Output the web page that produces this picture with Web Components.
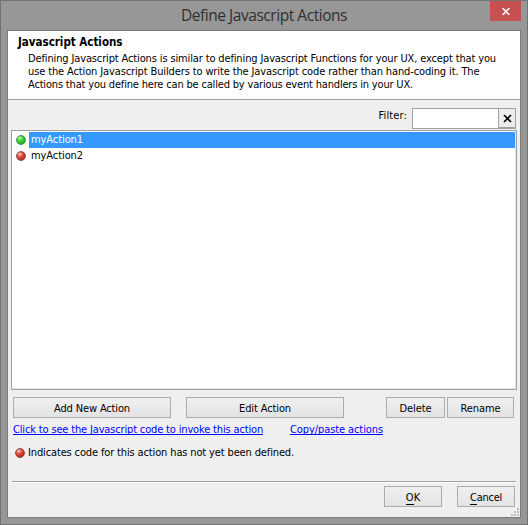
<!DOCTYPE html>
<html lang="en"><head><meta charset="utf-8"><title>Define Javascript Actions</title>
<style>
html,body{margin:0;height:100%;overflow:hidden}
body{font:11px/13px "DejaVu Sans Condensed","DejaVu Sans",sans-serif;font-stretch:condensed;color:#000}
</style></head><body>
<js-dialog></js-dialog>
<script>
const define=(name,html,ready)=>customElements.define(name,class extends HTMLElement{
  connectedCallback(){
    if(this.shadowRoot)return;
    this.attachShadow({mode:"open"}).innerHTML=html;
    if(ready)ready.call(this,this.shadowRoot);
  }
});
// One line of text tracked so that it fills the width given in "w".
define("fit-text",`<style>:host{display:block;white-space:pre;width:max-content;flex:none}span{display:inline-block}::slotted(u){text-decoration:none;border-bottom:1px solid}</style><span><slot></slot></span>`,function(r){
  const w=+this.getAttribute("w"),s=r.querySelector("span"),n=this.textContent.length;
  const gap=(w-s.getBoundingClientRect().width)/n;
  s.style.letterSpacing=gap.toFixed(4)+"px";
});
define("push-button",`<style>:host{display:flex;box-sizing:border-box;height:21px;border:1px solid #acacac;background:linear-gradient(#f0f0f0,#e3e3e3);justify-content:center;padding-top:4px;flex:none}</style><slot></slot>`);
define("status-ball",`<style>:host{display:block;width:10px;height:10px;flex:none}svg{display:block}.a{stop-color:var(--hi)}.b{stop-color:var(--mid)}.c{stop-color:var(--lo)}circle{stroke:var(--edge)}</style>
<svg width="10" height="10" viewBox="0 0 11 11"><defs><radialGradient id="g" cx=".36" cy=".3" r=".75"><stop class="a" offset="0"/><stop class="b" offset=".5"/><stop class="c" offset="1"/></radialGradient></defs><circle cx="5.5" cy="5.5" r="4.9" fill="url(#g)" stroke-width="1"/><ellipse cx="4.2" cy="3.4" rx="2.2" ry="1.3" fill="#fff" opacity=".35"/></svg>`,function(){
  const c=this.getAttribute("tone")==="green"?["#9cf39c","#35cf35","#14b016","#4a8a4a"]:["#f6a598","#dc4434","#b8201a","#8a4a45"];
  ["--hi","--mid","--lo","--edge"].forEach((k,i)=>this.style.setProperty(k,c[i]));
});
define("action-row",`<style>:host{display:flex;height:16px;padding-left:4px}status-ball{margin:3px 3px 0 0}div{flex:1;height:16px;padding:1px 0 0 2px;box-sizing:border-box}:host([selected]) div{background:#3399ff;color:#fff}</style><div><slot></slot></div>`,function(r){
  const b=document.createElement("status-ball");b.setAttribute("tone",this.getAttribute("tone"));
  r.querySelector("div").before(b);
});
define("action-list",`<style>:host{display:block;box-sizing:border-box;width:506px;height:260px;margin:1px 0 0 3px;background:#fff;border:1px solid #a0a0a0;box-shadow:inset -1px -1px #e3e3e3;padding:1px 1px 0 0}</style><slot></slot>`);
define("filter-box",`<style>:host{display:flex;height:21px;margin:8px 4px 0 0;justify-content:flex-end}fit-text{margin:1px 5px 0 0}
.i{box-sizing:border-box;width:104px;height:21px;border:1px solid #a0a0a0;background:#fff;display:flex;justify-content:flex-end}
.x{box-sizing:border-box;width:17px;height:19px;border-left:1px solid #a0a0a0;border-bottom:1px solid #a0a0a0;background:#ececec;display:grid;place-items:center}svg{display:block}</style>
<fit-text w="28.5">Filter:</fit-text><div class="i"><div class="x"><svg width="9" height="9" viewBox="0 0 9 9"><path d="M1 1 8 8M8 1 1 8" stroke="#000" stroke-width="1.6"/></svg></div></div>`);
define("dialog-header",`<style>:host{display:block;box-sizing:border-box;height:69px;background:#fff;border-bottom:1px solid #a0a0a0;padding:5px 0 0 10px}.b{font-size:11.5px;font-weight:bold}.d{padding:3px 0 0 10px}</style>
<fit-text class="b" w="104.5">Javascript Actions</fit-text><div class="d">
<fit-text w="468">Defining Javascript Actions is similar to defining Javascript Functions for your UX, except that you</fit-text>
<fit-text w="451.5">use the Action Javascript Builders to write the Javascript code rather than hand-coding it. The</fit-text>
<fit-text w="385">Actions that you define here can be called by various event handlers in your UX.</fit-text></div>`);
define("title-bar",`<style>:host{display:grid;grid-template-columns:1fr 31px;height:29px;padding-right:6px;box-sizing:border-box}.t{font:15.5px/20px "Open Sans","Noto Sans",sans-serif;color:#303030;padding:4px 0 0 180px}
.c{height:20px;background:#c75050;display:grid;place-items:center;width:31px}svg{display:block}</style>
<fit-text class="t" w="166">Define Javascript Actions</fit-text><div class="c"><svg width="8" height="7" viewBox="0 0 8 7"><path d="M.6 0 7.4 7M7.4 0 .6 7" stroke="#fff" stroke-width="1.6"/></svg></div>`);
define("link-text",`<style>:host{display:block;color:#0000ff;height:11px;border-bottom:1px solid #0000ff;line-height:13px;flex:none}</style><slot></slot>`);
define("size-grip",`<style>:host{display:block;position:absolute;right:1px;bottom:1px;width:8px;height:8px}svg{display:block}</style><svg width="8" height="8" fill="#bcbcbc"><path d="M6 0h2v2H6zM3 3h2v2H3zM6 3h2v2H6zM0 6h2v2H0zM3 6h2v2H3zM6 6h2v2H6z"/></svg>`);
define("js-dialog",`<style>
:host{display:block;box-sizing:border-box;width:528px;height:525px;background:#979797;border:1px solid #737373}
.client{box-sizing:border-box;position:relative;width:514px;height:488px;margin-left:6px;border:1px solid #7b7b7b;background:#efefef}
.row{display:flex}.btns{padding:7px 0 0 5px}.links{padding:5px 0 0 5px}.note{padding:11px 0 0 7px;height:13px;gap:3px}.note status-ball{margin-top:2px}
hr{border:0;height:1px;background:#a0a0a0;border-bottom:1px solid #fff;margin:22px 4px 0}
.foot{justify-content:flex-end;gap:15px;padding:3px 5px 0 0}
.m15{margin-left:15px}.m42{margin-left:42px}.m2{margin-left:2px}.m27{margin-left:27px}
</style>
<title-bar></title-bar>
<div class="client"><dialog-header></dialog-header><filter-box></filter-box>
<action-list><action-row tone="green" selected><fit-text w="52">myAction1</fit-text></action-row><action-row tone="red"><fit-text w="52">myAction2</fit-text></action-row></action-list>
<div class="row btns"><push-button style="width:158px"><fit-text w="76">Add New Action</fit-text></push-button><push-button class="m15" style="width:158px"><fit-text w="52">Edit Action</fit-text></push-button><push-button class="m42" style="width:59px"><fit-text w="32">Delete</fit-text></push-button><push-button class="m2" style="width:67px"><fit-text w="40">Rename</fit-text></push-button></div>
<div class="row links"><link-text><fit-text w="250">Click to see the Javascript code to invoke this action</fit-text></link-text><link-text class="m27"><fit-text w="93">Copy/paste actions</fit-text></link-text></div>
<div class="row note"><status-ball tone="red"></status-ball><fit-text w="266">Indicates code for this action has not yet been defined.</fit-text></div>
<hr><div class="row foot"><push-button style="width:58px"><fit-text w="14.5"><u>O</u>K</fit-text></push-button><push-button style="width:58px"><fit-text w="32"><u>C</u>ancel</fit-text></push-button></div>
<size-grip></size-grip></div>`);
</script></body></html>
